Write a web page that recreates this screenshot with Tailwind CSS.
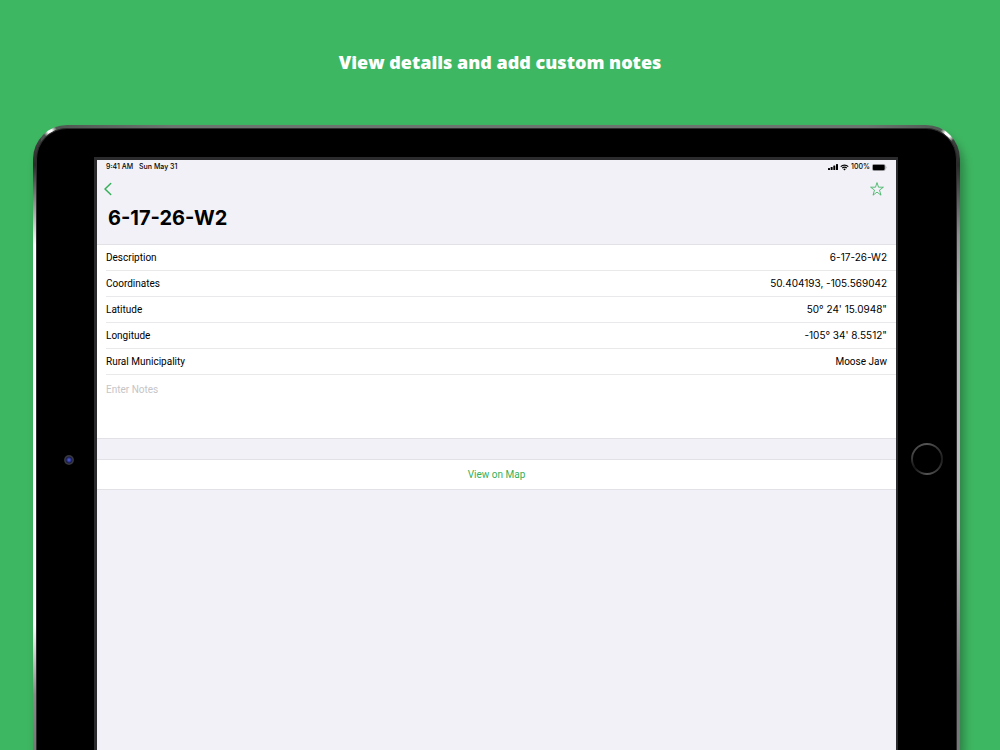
<!DOCTYPE html>
<html lang="en">
<head>
    <meta charset="UTF-8">
    <meta name="viewport" content="width=device-width, initial-scale=1">
    <title>6-17-26-W2</title>
    <script src="https://cdn.jsdelivr.net/npm/@tailwindcss/browser@4"></script>
</head>
<body class="h-screen overflow-hidden flex flex-col bg-[#3eb762] font-[Inter,sans-serif] text-black">

    <h1 class="py-[50px] text-center text-lg leading-[25px] font-extrabold text-white font-['Open_Sans',sans-serif]">View details and add custom notes</h1>

    <!-- Tablet: metal rim, then the black bezel -->
    <div class="flex-1 flex ml-[33px] mr-10 p-[3px] pb-0 rounded-t-[34px] shadow-[4px_8px_10px_rgba(0,0,0,0.3)] bg-[radial-gradient(circle_at_17px_6px,#fff_0,#fff_2px,transparent_7px),radial-gradient(circle_at_calc(100%-12px)_9px,#fff_0,#fff_3px,transparent_8px),linear-gradient(#48514b,#2a2a2a_40px,#fff_120px,#fff_500px,#888_570px,#777),linear-gradient(#48514b,#2a2a2a_40px,#8e8c92_110px,#b9b8bd_180px,#b9b8bd_400px,#75747a_560px,#77767c),linear-gradient(90deg,#48514b,#6c746f_15%,#6c746f_90%,#48514b)] bg-[length:auto,auto,8px_100%,8px_100%,100%_100%] bg-[position:0_0,0_0,0_0,100%_0,0_0] bg-no-repeat">
        <div class="flex-1 flex bg-black rounded-t-[31px] border border-b-0 border-[#2b2b2b] pt-7">

            <div class="w-[57px] flex justify-center pt-[298px] pl-[6px]">
                <span class="size-[10px] rounded-full bg-[radial-gradient(circle,#5a68d8_0,#29308c_2px,#1c1e3c_3px,#3c3d44_4px,#2e2f34_5px)]"></span>
            </div>

            <main class="flex-1 flex flex-col bg-[#f2f1f7] border-[#2b2a2c] border-t-[3px] border-l-[3px] border-r-2">
                <div class="flex items-center justify-between px-[9px] pt-px text-[7px] leading-[12px] font-medium">
                    <div class="flex gap-[6px]">
                        <span>9:41 AM</span>
                        <span>Sun May 31</span>
                    </div>
                    <div class="flex items-center gap-[2px]">
                        <svg class="w-[10px] h-[6px]" viewBox="0 0 20 12">
                            <rect x="0" y="8" width="4" height="4" rx="1"/>
                            <rect x="5.3" y="6" width="4" height="6" rx="1"/>
                            <rect x="10.6" y="3" width="4" height="9" rx="1"/>
                            <rect x="16" y="0" width="4" height="12" rx="1"/>
                        </svg>
                        <svg class="w-[9px] h-[7px]" viewBox="0 0 18 14" fill="none" stroke="#000" stroke-width="2.5">
                            <path d="M1.5 5.2a10.6 10.6 0 0 1 15 0M4.4 8.2a6.5 6.5 0 0 1 9.2 0"/>
                            <path d="M6.4 10.2a3.6 3.6 0 0 1 5.2 0L9 13z" fill="#000" stroke="none"/>
                        </svg>
                        <span>100%</span>
                        <svg class="w-[15px] h-[7px]" viewBox="0 0 30 14">
                            <rect x=".6" y=".6" width="25.8" height="12.8" rx="3.4" fill="none" stroke="#8b8a8f" stroke-width="1.2"/>
                            <rect x="1.6" y="1.6" width="23.8" height="10.8" rx="2.2"/>
                            <path d="M27.6 4.6c1.6.6 1.6 4.2 0 4.8z" fill="#8b8a8f"/>
                        </svg>
                    </div>
                </div>

                <nav class="flex items-center justify-between h-[31px] pl-[6px] pr-3 text-[#34b058]">
                    <button type="button" aria-label="Back">
                        <svg class="w-[10px] h-[14px]" viewBox="0 0 10 14" fill="none" stroke="currentColor" stroke-width="1.5" stroke-linecap="round" stroke-linejoin="round">
                            <path d="M7.7 1.5 2 7l5.7 5.5"/>
                        </svg>
                    </button>
                    <button type="button" aria-label="Add to favourites">
                        <svg class="size-[14px]" viewBox="0 0 14 14" fill="none" stroke="currentColor" stroke-width=".8" stroke-linejoin="round">
                            <path d="M7 .6l1.5 4.6h4.9L9.5 8.1l1.5 5.1-4-3.1-4 3.1 1.5-5.1L.6 5.2h4.9z"/>
                        </svg>
                    </button>
                </nav>

                <h2 class="pl-[11px] pt-px pb-[13px] text-xl leading-[26px] font-bold">6-17-26-W2</h2>

                <section class="bg-white border-y border-[#e2e1e6] text-[10px] leading-[25px] font-[Roboto,sans-serif]">
                    <dl class="pl-[9px]">
                        <div class="flex justify-between pr-[9px] border-b border-[#e9e9eb]">
                            <dt>Description</dt><dd class="font-[Inter,sans-serif]">6-17-26-W2</dd>
                        </div>
                        <div class="flex justify-between pr-[9px] border-b border-[#e9e9eb]">
                            <dt>Coordinates</dt><dd class="font-[Inter,sans-serif]">50.404193, -105.569042</dd>
                        </div>
                        <div class="flex justify-between pr-[9px] border-b border-[#e9e9eb]">
                            <dt>Latitude</dt><dd class="font-[Inter,sans-serif]">50° 24' 15.0948"</dd>
                        </div>
                        <div class="flex justify-between pr-[9px] border-b border-[#e9e9eb]">
                            <dt>Longitude</dt><dd class="font-[Inter,sans-serif]">-105° 34' 8.5512"</dd>
                        </div>
                        <div class="flex justify-between pr-[9px] border-b border-[#e9e9eb]">
                            <dt>Rural Municipality</dt><dd>Moose Jaw</dd>
                        </div>
                    </dl>
                    <textarea aria-label="Notes" placeholder="Enter Notes" class="block w-full h-[63px] px-[9px] pt-[9px] leading-3 resize-none outline-none placeholder:text-[#c5c5c7]"></textarea>
                </section>

                <button type="button" class="mt-5 h-[31px] bg-white border-y border-[#e2e1e6] text-[10px] text-[#34b058] font-[Roboto,sans-serif]">View on Map</button>
            </main>

            <div class="w-[58px] flex justify-center pt-[286px]">
                <button type="button" aria-label="Home" class="size-8 p-[2px] rounded-full bg-[conic-gradient(#555,#1c1c1c_25%,#333_35%,#555_50%,#151515_65%,#444_80%,#555)]">
                    <span class="block size-full rounded-full bg-black"></span>
                </button>
            </div>
        </div>
    </div>

</body>
</html>
